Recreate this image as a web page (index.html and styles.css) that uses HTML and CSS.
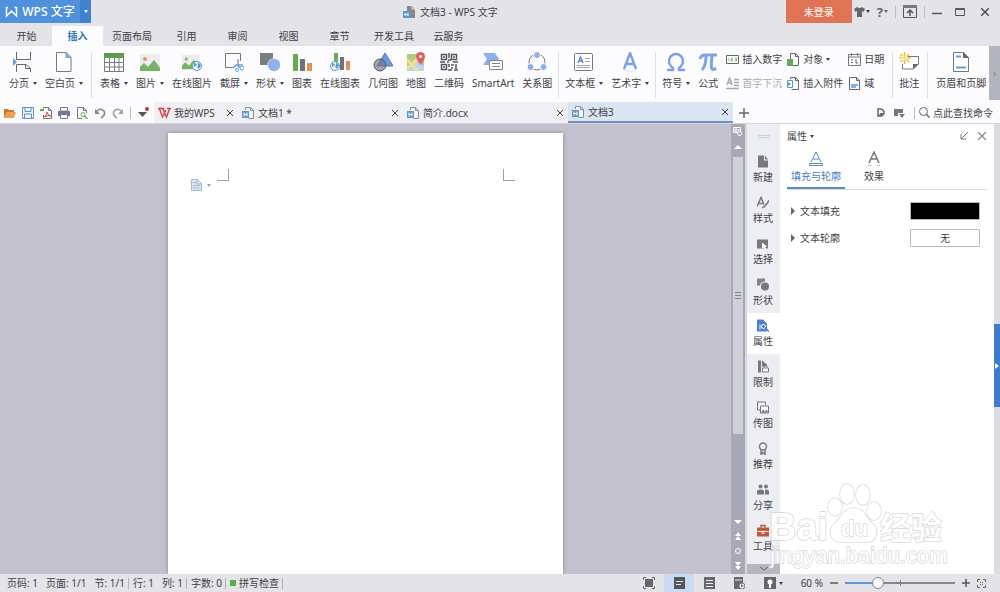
FILE: index.html
```html
<!DOCTYPE html>
<html lang="zh-CN">

<head>
    <meta charset="UTF-8">
    <meta name="viewport" content="width=device-width, initial-scale=1.0">
    <title>文档3 - WPS 文字</title>
    <link rel="stylesheet" href="styles.css">
</head>

<body>

    <!-- shared icons -->
    <svg class="icon_store">
        <symbol id="doc" viewBox="0 0 12 12">
            <path d="M3.5 3V.5h5l3 3v8h-5" fill="#f7f8fa" stroke="#8a8c94" />
            <path d="M8.5.5v3h3" fill="none" stroke="#8a8c94" />
            <rect x="0" y="4" width="7" height="7" fill="#5d97c9" />
            <path d="M2 5.5v4M2 7.5h3M5 5.5v4" stroke="#fff" />
        </symbol>
        <symbol id="close" viewBox="0 0 8 8">
            <path d="M1 1l6 6M7 1L1 7" stroke="currentColor" fill="none" />
        </symbol>
        <symbol id="photo" viewBox="0 0 20 20">
            <rect x="0" y="2" width="20" height="17" fill="#e9edf0" />
            <circle cx="5" cy="7" r="2" fill="#ea9257" />
            <path d="M0 19v-4l4-4 4 4 6-7 6 8v3z" fill="#74b266" />
        </symbol>
        <symbol id="globe" viewBox="0 0 10 10">
            <circle cx="5" cy="5" r="4.5" fill="#f5f9fc" stroke="#5b9bd0" />
            <path d="M2 2l3 1-1 2-2 1zM6 1l3 3-2 4-2-2 1-2z" fill="#5b9bd0" />
        </symbol>
    </svg>

    <header id="title_bar">
        <button class="app_name">
            <svg width="13" height="12" viewBox="0 0 13 12"><path d="M1.500 1v9L6.500 5l5 5V1M1 1.500h2M9.500 1.500h2" fill="none" stroke="#fff" stroke-width="1.500" /></svg>
            WPS 文字
        </button>
        <button class="app_menu" aria-label="菜单"><i class="arrow"></i></button>
        <div class="doc_title">
            <svg width="12" height="12" viewBox="0 0 12 12"><path d="M4 0h5l3 3v9H4z" fill="#85868c" /><path d="M9 0v3h3" fill="none" stroke="#e4e3e8" /><rect y="5" width="7" height="7" fill="#5a9bd5" /><path d="M2 7v3M2 8.500h3M5 7v3" stroke="#fff" /></svg>
            文档3 - WPS 文字
        </div>
        <button class="login">未登录</button>
        <div class="window_tools">
            <button aria-label="皮肤"><svg width="11" height="10" viewBox="0 0 11 10"><path d="M0 2l3-2q2.500 2 5 0l3 2-1.500 3L8 4v6H3V4L1.500 5z" fill="#66676d" /></svg><i class="arrow"></i></button>
            <button class="help" aria-label="帮助">?<i class="arrow"></i></button>
            <span class="line"></span>
            <button aria-label="功能区"><svg width="14" height="13" viewBox="0 0 14 13"><path d="M.5.500h13v12H.5z" fill="none" stroke="#55565c" /><path d="M0 0h14v3H0z" fill="#77787e" /><path d="M7 11V5M4 8l3-3 3 3" fill="none" stroke="#55565c" stroke-width="1.500" /></svg></button>
            <span class="line"></span>
            <button class="win" aria-label="最小化"><svg width="10" height="10" viewBox="0 0 10 10"><path d="M0 6.500h10" stroke="#55565c" stroke-width="1.500" /></svg></button>
            <button class="win" aria-label="最大化"><svg width="10" height="10" viewBox="0 0 10 10"><path d="M.5 1.500h9v7h-9zM0 2.500h10" fill="none" stroke="#55565c" /></svg></button>
            <button class="win" aria-label="关闭"><svg width="10" height="10" viewBox="0 0 8 8"><use href="#close" /></svg></button>
        </div>
    </header>

    <nav id="menu">
        <button>开始</button>
        <button class="active">插入</button>
        <button>页面布局</button>
        <button>引用</button>
        <button>审阅</button>
        <button>视图</button>
        <button>章节</button>
        <button>开发工具</button>
        <button>云服务</button>
    </nav>

    <div id="ribbon">
        <div class="tools">
            <button class="tool">
                <svg viewBox="0 0 20 20"><path d="M3.500 0v7.500h14V0M3.500 20v-7.500H13l4.500 4V20M12.500 12.500v4h5" fill="none" stroke="#66676d" /><path d="M0 6l4 4-4 4z" fill="#6d9be0" /></svg>
                <span>分页<i class="arrow"></i></span>
            </button>
            <button class="tool">
                <svg viewBox="0 0 20 20"><path d="M2.500.5H12l5 5v14H2.500z" fill="#fff" stroke="#77787e" /><path d="M12 .5l5 5h-5z" fill="#8ab0ee" stroke="#6d9be0" /></svg>
                <span>空白页<i class="arrow"></i></span>
            </button>
            <span class="sep"></span>
            <button class="tool">
                <svg viewBox="0 0 20 20"><path d="M.5 1.500h19v18H.5zM.5 10.500h19M.5 15h19M5.500 6v13M10.500 6v13M15 6v13" fill="#fff" stroke="#77787e" /><path d="M0 1h20v5H0z" fill="#5d9c50" /></svg>
                <span>表格<i class="arrow"></i></span>
            </button>
            <button class="tool">
                <svg><use href="#photo" /></svg>
                <span>图片<i class="arrow"></i></span>
            </button>
            <button class="tool">
                <svg viewBox="0 0 20 20"><use href="#photo" width="17" height="17" y="1" /><use href="#globe" x="10" y="9" width="10" height="10" /></svg>
                <span>在线图片</span>
            </button>
            <button class="tool">
                <svg viewBox="0 0 20 20"><path d="M9 15.500H1.500v-14h15V9" fill="none" stroke="#77787e" /><path d="M14 7v7l4 3M19 13h-7l-3 3" fill="none" stroke="#6d9ed6" stroke-width="1.500" /><circle cx="18" cy="16" r="2" fill="#fff" stroke="#6d9ed6" /><circle cx="13" cy="18" r="1.500" fill="#fff" stroke="#6d9ed6" /></svg>
                <span>截屏<i class="arrow"></i></span>
            </button>
            <button class="tool">
                <svg viewBox="0 0 20 20"><path d="M0 1h13v12H0z" fill="#7c7d83" /><circle cx="14" cy="13" r="6.500" fill="#8fb2ef" stroke="#fff" stroke-width=".5" /></svg>
                <span>形状<i class="arrow"></i></span>
            </button>
            <button class="tool">
                <svg viewBox="0 0 20 20"><path d="M1 2h5v17H1z" fill="#6aa956" /><path d="M8 7h5v12H8z" fill="#707177" /><path d="M15 11h5v8h-5z" fill="#e88e50" /></svg>
                <span>图表</span>
            </button>
            <button class="tool">
                <svg viewBox="0 0 20 20"><path d="M4 1h4v12H4z" fill="#6aa956" /><path d="M10 5h4v13h-4z" fill="#707177" /><path d="M16 9h4v9h-4z" fill="#e88e50" /><use href="#globe" x="0" y="9" width="10" height="10" /></svg>
                <span>在线图表</span>
            </button>
            <button class="tool">
                <svg viewBox="0 0 20 20"><path d="M12 1l8 13H4z" fill="#6a9be8" stroke="#4878bd" /><circle cx="7" cy="13" r="6" fill="#74777f" fill-opacity=".65" stroke="#55575e" /></svg>
                <span>几何图</span>
            </button>
            <button class="tool">
                <svg viewBox="0 0 20 20"><path d="M1 2h17v17H1z" fill="#a9cd83" /><path d="M1 19L12 8l6 6v5z" fill="#bcd4f0" /><path d="M1 8l11 11M1 17L14 4" stroke="#f5df96" stroke-width="3" /><path d="M14.500 13Q10 7 10 4.500a4.500 4.500 0 0 1 9 0Q19 7 14.500 13z" fill="#e0605f" /><circle cx="14.500" cy="4.500" r="1.500" fill="#fff" /></svg>
                <span>地图</span>
            </button>
            <button class="tool">
                <svg viewBox="0 0 20 20"><path d="M2.500 2.500h5v5h-5zM12.500 2.500h5v5h-5zM2.500 12.500h5v5h-5z" fill="none" stroke="#55565c" stroke-width="1.500" /><path d="M4 5h2M14 5h2M4 15h2M10 1v5M9 8h3M1 10h5M8 10h2M14 10h5M10 12v3M12 13h3M17 12v3M12 16h2M9 18h4M15 18h4M16 16h2" fill="none" stroke="#55565c" stroke-width="1.500" /></svg>
                <span>二维码</span>
            </button>
            <button class="tool">
                <svg viewBox="0 0 20 20"><path d="M0 1h12l4 6-4 6H0l4-6z" fill="#8db1ef" /><path d="M6.500 8.500h13v9h-13z" fill="#fff" stroke="#85868c" /><path d="M9 11.500h8M9 14.500h8" stroke="#85868c" /></svg>
                <span>SmartArt</span>
            </button>
            <button class="tool">
                <svg viewBox="0 0 20 20"><circle cx="10" cy="10" r="8" fill="none" stroke="#77787e" /><circle cx="10" cy="3" r="3.500" fill="#8db1ef" stroke="#fff" /><circle cx="3.500" cy="15" r="3.500" fill="#8db1ef" stroke="#fff" /><circle cx="16.500" cy="15" r="3.500" fill="#8db1ef" stroke="#fff" /></svg>
                <span>关系图</span>
            </button>
            <span class="sep tight"></span>
            <button class="tool">
                <svg viewBox="0 0 20 20"><rect x=".5" y="1.500" width="18" height="17" rx="1" fill="#fff" stroke="#77787e" /><path d="M4 11l2.500-6L9 11M5 9h3" fill="none" stroke="#5c8edb" stroke-width="1.500" /><path d="M11 6.500h5M11 9.500h5M3 13.500h13M3 15.500h13" stroke="#a5a6ab" /></svg>
                <span>文本框<i class="arrow"></i></span>
            </button>
            <button class="tool">
                <svg viewBox="0 0 20 20"><path d="M4 17l6-16 6 16M6 12h8" fill="none" stroke="#7ba4e8" stroke-width="2.500" /><path d="M3 18q7 3 14 0" fill="none" stroke="#dbe5f6" /></svg>
                <span>艺术字<i class="arrow"></i></span>
            </button>
            <span class="sep tight"></span>
            <button class="tool">
                <svg viewBox="0 0 20 20"><path d="M1 18h6v-2Q3 13 3 9a7 7 0 0 1 14 0q0 4-4 7v2h6" fill="none" stroke="#7ba4e8" stroke-width="2.500" /></svg>
                <span>符号<i class="arrow"></i></span>
            </button>
            <button class="tool">
                <svg viewBox="0 0 20 20"><path d="M2 7q1-4 5-4h12M8 4q0 10-4 14M14 4q-1 8-.5 12 1 3 4.500 0" fill="none" stroke="#7ba4e8" stroke-width="3" /></svg>
                <span>公式</span>
            </button>

            <div class="small_tools">
                <button><svg viewBox="0 0 13 13"><path d="M.5 2.500h12v8H.5z" fill="#fff" stroke="#66676d" /><path d="M3 5v3M5 5h1.500v1.500H5V8h2M8.500 5h2v3h-2M9 6.500h1" fill="none" stroke="#6aa956" stroke-width=".8" /></svg>插入数字</button>
                <button disabled><svg viewBox="0 0 13 13"><path d="M1 8l2.500-7L6 8M2 6h3M8 2.500h5M8 5.500h5M8 8.500h5M0 11.500h13" fill="none" stroke="#a9a9af" stroke-width="1.500" /></svg>首字下沉</button>
                <button><svg viewBox="0 0 13 13"><path d="M3.500 7V.5h5l3 3v9H6M8.500.5v3h3" fill="none" stroke="#66676d" /><path d="M0 6h6v7H0z" fill="#6aa956" /></svg>对象<i class="arrow"></i></button>
                <button><svg viewBox="0 0 13 13"><path d="M3.500 2V.5h5l3 3v9h-7M8.500.5v3h3" fill="none" stroke="#66676d" /><path d="M.5 3.500h5v7h-5z" fill="#fff" stroke="#5a9bd5" /><path d="M1 5l3 2-3 2z" fill="#5a9bd5" /></svg>插入附件</button>
                <button><svg viewBox="0 0 13 13"><path d="M.5 1.500h12v11H.5zM.5 4h12M3.500 0v3M9.500 0v3" fill="none" stroke="#77787e" /><path d="M3 7h2M3 9.500h2M8 6v4h2" fill="none" stroke="#66676d" /></svg>日期</button>
                <button><svg viewBox="0 0 13 13"><path d="M1.500.5h7l3 3v9h-10zM8.500.5v3h3" fill="#fff" stroke="#66676d" /><path d="M3 8h7M3 10h5" stroke="#5a9bd5" stroke-width="1.500" /></svg>域</button>
            </div>

            <span class="sep tight"></span>
            <button class="tool">
                <svg viewBox="0 0 20 20"><path d="M9 4.500h10.500V12l-5 5H3.500v-5" fill="#fff" stroke="#77787e" /><path d="M14 17v-5h5.500z" fill="#66676d" /><path d="M5.500 0v4M5.500 8v4M0 6h3M8 6h4M1.500 2l2 2M10 2L7.500 4.500M1.500 10l2-2M10 10L7.500 7.500" stroke="#efbd3f" stroke-width="1.500" /><circle cx="5.500" cy="6" r="2" fill="#f9dc79" /></svg>
                <span>批注</span>
            </button>
            <span class="sep"></span>
            <button class="tool">
                <svg viewBox="0 0 20 20"><path d="M2.500.5h10l5 5v14h-15z" fill="#fff" stroke="#77787e" /><path d="M12 0v6h6z" fill="#66676d" /><path d="M5 4.500h5M5 15.500h10" stroke="#6d9ed6" stroke-width="2" /></svg>
                <span>页眉和页脚</span>
            </button>
        </div>
        <button class="ribbon_next" aria-label="更多">›</button>
    </div>

    <div id="tab_bar">
        <div class="quick">
            <button aria-label="打开"><svg viewBox="0 0 12 12"><path d="M0 11V2h4l1 1h5v2H3z" fill="#cc7a30" /><path d="M3 5h9l-2 6H0z" fill="#f0a04b" /></svg></button>
            <button aria-label="保存"><svg viewBox="0 0 12 12"><path d="M.5.500h11v11H.5zM3 .5v4h6v-4M2.500 11V7h7v4" fill="#eaf2fb" stroke="#5e8fc5" /></svg></button>
            <button aria-label="输出PDF"><svg viewBox="0 0 12 12"><path d="M3.500 3V.5h5l3 3v8h-8V8M8.500.5v3h3" fill="none" stroke="#77787e" /><path d="M0 3h4" stroke="#6aa956" stroke-width="2" /><path d="M4 10q3-2 3-5 1 4 4 4-4-1-7 1" fill="none" stroke="#d0514e" /></svg></button>
            <button aria-label="打印"><svg viewBox="0 0 12 12"><path d="M0 4h12v5H0z" fill="#77779b" /><path d="M2.500.500h7V4h-7zM2.500 7.500h7v4h-7z" fill="#fff" stroke="#77779b" /></svg></button>
            <button aria-label="打印预览"><svg viewBox="0 0 12 12"><path d="M6 11.500H1.500V.5h6l3 3V6M7.500.5v3h3" fill="none" stroke="#77787e" /><circle cx="7" cy="7.500" r="2" fill="#fff" stroke="#6aa956" /><path d="M8.500 9l3 3" stroke="#6aa956" stroke-width="1.500" /></svg></button>
            <button aria-label="撤销"><svg viewBox="0 0 12 12"><path d="M2 5q4-5 8-1 2 4-3 7" fill="none" stroke="#85868c" stroke-width="1.500" /><path d="M1 2v5h5z" fill="#85868c" /></svg></button>
            <button aria-label="恢复"><svg viewBox="0 0 12 12"><path d="M10 5Q6 0 2 4q-2 4 3 7" fill="none" stroke="#a0a1a6" stroke-width="1.500" /><path d="M11 2v5H6z" fill="#a0a1a6" /></svg></button>
            <span class="line"></span>
            <button aria-label="自定义"><svg viewBox="0 0 12 12"><path d="M1 5h9L5.500 10z" fill="#55565c" /><circle cx="10" cy="2" r="2" fill="#ca3038" /></svg></button>
        </div>
        <div class="doc_tab home">
            <svg width="13" height="12" viewBox="0 0 13 12"><path d="M0 1.500h6.500M9 1.500h4M1.500 2l3 8L8 3M5 2l3.500 8L11.500 2" fill="none" stroke="#d4494e" stroke-width="1.500" /></svg>
            <span>我的WPS</span>
            <button aria-label="关闭"><svg><use href="#close" /></svg></button>
        </div>
        <div class="doc_tab">
            <svg width="12" height="12"><use href="#doc" /></svg>
            <span>文档1 *</span>
            <button aria-label="关闭"><svg><use href="#close" /></svg></button>
        </div>
        <div class="doc_tab">
            <svg width="12" height="12"><use href="#doc" /></svg>
            <span>简介.docx</span>
            <button aria-label="关闭"><svg><use href="#close" /></svg></button>
        </div>
        <div class="doc_tab active">
            <svg width="12" height="12"><use href="#doc" /></svg>
            <span>文档3</span>
            <button aria-label="关闭"><svg><use href="#close" /></svg></button>
        </div>
        <button class="add_tab" aria-label="新建"><svg width="10" height="10" viewBox="0 0 10 10"><path d="M0 5h10M5 0v10" stroke="#66676d" stroke-width="1.500" /></svg></button>
        <div class="find">
            <button aria-label="文档"><svg width="8" height="9" viewBox="0 0 8 9"><path d="M1 1h3q3 1 3 3.500T4 8H1z" fill="none" stroke="#66676d" stroke-width="1.500" /><path d="M3 5h4L4 8H2z" fill="#66676d" /></svg></button>
            <button aria-label="窗口"><svg width="11" height="10" viewBox="0 0 11 10"><path d="M0 1h9v4H4v3H0zM5 6h6L8 10z" fill="#77787e" /></svg></button>
            <span class="line"></span>
            <button class="find_text"><svg width="11" height="11" viewBox="0 0 11 11"><circle cx="4.500" cy="4.500" r="4" fill="none" stroke="#66676d" /><path d="M7.500 7.500l3 3" stroke="#66676d" stroke-width="1.500" /></svg>点此查找命令</button>
        </div>
    </div>

    <main>
        <div id="canvas">
            <div class="page">
                <div class="margins">
                    <span class="corner left"></span>
                    <span class="corner right"></span>
                </div>
                <button class="page_option" aria-label="页面选项"><svg width="11" height="12" viewBox="0 0 11 12"><path d="M.5.500h6l4 4v7H.5z" fill="#dbe6f1" stroke="#a3b9d0" /><path d="M6 0v5h5M2 3.500h3M2 6.500h7M2 9h7" fill="none" stroke="#a3b9d0" /></svg><i class="arrow"></i></button>
            </div>
        </div>

        <div id="scroll">
            <svg width="10" height="10" viewBox="0 0 10 10"><path d="M.5.500h7v5h-7zM.5 3h7M3 .5v5" fill="none" stroke="#fff" /><circle cx="6.500" cy="6.500" r="2" fill="#a9a8b6" stroke="#fff" /></svg>
            <svg width="8" height="4" viewBox="0 0 8 4"><path d="M0 4l4-4 4 4z" fill="#fff" /></svg>
            <div class="track"><div class="thumb"></div></div>
            <svg width="8" height="4" viewBox="0 0 8 4"><path d="M0 0l4 4 4-4z" fill="#fff" /></svg>
            <svg width="6" height="8" viewBox="0 0 6 8"><path d="M0 4l3-4 3 4zM0 8l3-4 3 4z" fill="#fff" /></svg>
            <svg width="6" height="6" viewBox="0 0 6 6"><circle cx="3" cy="3" r="2.500" fill="none" stroke="#fff" /></svg>
            <svg width="6" height="8" viewBox="0 0 6 8"><path d="M0 0l3 4 3-4zM0 4l3 4 3-4z" fill="#fff" /></svg>
        </div>

        <aside id="task_bar">
            <span class="grip"></span>
            <button><svg viewBox="0 0 12 12"><path d="M1 0h6v5h4v7H1zM8 0l3 4H8z" fill="#77787e" /></svg>新建</button>
            <button><svg viewBox="0 0 12 12"><path d="M0 10L4 1l3 7M1 7h5M5 11q2 1 7-7" fill="none" stroke="#77787e" stroke-width="1.500" /></svg>样式</button>
            <button><svg viewBox="0 0 12 12"><path d="M0 2h11v9H0z" fill="#77787e" /><path d="M5 5l5 4-2 .5 1 2-1.500.5-1-2L5 11z" fill="#fff" /></svg>选择</button>
            <button><svg viewBox="0 0 12 12"><path d="M0 0h8v3a5 5 0 0 0-5 4H0z" fill="#85868c" /><circle cx="8" cy="8" r="4" fill="#77787e" /></svg>形状</button>
            <button class="active"><svg viewBox="0 0 12 12"><path d="M0 0h6l4 4v8H0z" fill="#4d82cf" /><circle cx="6.500" cy="7" r="2" fill="none" stroke="#fff" /><path d="M8 8l4 4" stroke="#4d82cf" stroke-width="1.500" /><path d="M3 5v5" stroke="#fff" /></svg>属性</button>
            <button><svg viewBox="0 0 12 12"><path d="M1 0h3v12H1zM5 0l5 4v2H5z" fill="#77787e" /><path d="M5.500 7.500h6v4h-6zM7 7V5.500h3V7" fill="#fff" stroke="#77787e" /></svg>限制</button>
            <button><svg viewBox="0 0 12 12"><path d="M3 8.500H.5v-8h8V4" fill="none" stroke="#77787e" /><path d="M3.500 4.500h8v7h-8z" fill="#fff" stroke="#77787e" /><path d="M4 11l2-3 2 2 2-2 1 3z" fill="#77787e" /></svg>传图</button>
            <button><svg viewBox="0 0 12 12"><circle cx="6" cy="4" r="3.500" fill="none" stroke="#77787e" stroke-width="1.500" /><path d="M4 7v5l2-2 2 2V7" fill="none" stroke="#77787e" stroke-width="1.500" /></svg>推荐</button>
            <button><svg viewBox="0 0 12 12"><circle cx="3.500" cy="3" r="2" fill="#77787e" /><circle cx="9" cy="3" r="2" fill="#77787e" /><path d="M0 11V8q0-2 3.500-2T7 8v3zM8 11V7q0-1 1-1 3 0 3 2v3z" fill="#77787e" /></svg>分享</button>
            <button><svg viewBox="0 0 12 12"><path d="M4 3V1h4v2" fill="none" stroke="#bd563b" stroke-width="1.500" /><path d="M0 3h12v9H0z" fill="#bd563b" /><path d="M0 7h12M5 6v3h2V6" fill="none" stroke="#fff" stroke-width=".8" /></svg>工具</button>
            <button class="more" aria-label="更多"><svg width="8" height="4" viewBox="0 0 8 4"><path d="M0 0l4 3 4-3" fill="none" stroke="#66676d" /></svg></button>
        </aside>

        <section id="panel">
            <div class="panel_head">
                <button>属性<i class="arrow"></i></button>
                <button class="push" aria-label="折叠"><svg width="8" height="8" viewBox="0 0 8 8"><path d="M8 0L1 7M1 2v5h5" fill="none" stroke="#77787e" /></svg></button>
                <button class="shut" aria-label="关闭"><svg width="10" height="10"><use href="#close" /></svg></button>
            </div>
            <div class="panel_tabs">
                <button class="active"><svg width="16" height="16" viewBox="0 0 16 16"><path d="M3 11L8 1l5 10M5 8h6M1.500 12.500h13v2h-13z" fill="none" stroke="#5a8cc8" /></svg>填充与轮廓</button>
                <button><svg width="16" height="16" viewBox="0 0 16 16"><path d="M3 12L8 1l5 11M5 8h6" fill="none" stroke="#77787e" stroke-width="1.500" /><path d="M2 14.500h3M11 14.500h3" stroke="#b5b6ba" /></svg>效果</button>
            </div>
            <div class="option">
                <button><i class="fold"></i>文本填充</button>
                <button class="swatch black" aria-label="黑色"></button>
            </div>
            <div class="option">
                <button><i class="fold"></i>文本轮廓</button>
                <button class="swatch">无</button>
            </div>
        </section>

        <div id="edge"><button aria-label="展开"><svg width="4" height="6" viewBox="0 0 4 6"><path d="M0 0l4 3-4 3z" fill="#fff" /></svg></button></div>

        <svg class="watermark" width="190" height="96" viewBox="0 0 190 96">
            <g fill="#fff" stroke="#d3d3d7" stroke-width="1.500">
                <ellipse cx="67" cy="31" rx="7" ry="9" />
                <ellipse cx="79" cy="18" rx="7" ry="10" />
                <ellipse cx="95" cy="19" rx="7" ry="10" />
                <ellipse cx="106" cy="35" rx="7" ry="9" />
                <path d="M86 32c10 0 13 11 19 16 7 7 3 18-5 18H72c-9 0-13-11-6-18 6-5 10-16 20-16z" />
                <text class="mark_big" x="1" y="64">Bai</text>
                <text class="mark_du" x="73" y="60">du</text>
                <text class="mark_cn" x="112" y="63">经验</text>
                <text class="mark_url" x="2" y="87">jingyan.baidu.com</text>
            </g>
        </svg>
    </main>

    <footer id="status">
        <div class="info">
            <span>页码: 1</span>
            <span>页面: 1/1</span>
            <span class="end">节: 1/1</span>
            <span>行: 1</span>
            <span class="end">列: 1</span>
            <span class="end">字数: 0</span>
            <span class="end spell"><i></i>拼写检查</span>
        </div>
        <div class="views">
            <button aria-label="全屏"><svg viewBox="0 0 12 12"><path d="M.5 3V.5H3M9 .5h2.500V3M.5 9v2.500H3M9 11.500h2.500V9" fill="none" stroke="#66676d" /><path d="M2 2h8v8H2z" fill="#66676d" /></svg></button>
            <button class="active" aria-label="页面视图"><svg viewBox="0 0 12 12"><path d="M1 0h11v12H1z" fill="#55565c" /><path d="M3 4.500h7M3 7.500h5" stroke="#dfe6f0" /></svg></button>
            <button aria-label="大纲视图"><svg viewBox="0 0 12 12"><path d="M1 0h11v12H1z" fill="#66676d" /><path d="M3 3.500h7M3 6.500h7M3 9.500h7" stroke="#eee" /></svg></button>
            <button aria-label="网页视图"><svg viewBox="0 0 12 12"><path d="M1 0h9v12H1z" fill="#66676d" /><path d="M2 3h7" stroke="#eee" /><circle cx="9" cy="9" r="3" fill="#e4e3e8" stroke="#77787e" /><path d="M8 7l3 2-3 1z" fill="#77787e" /></svg></button>
            <button aria-label="护眼"><svg viewBox="0 0 12 12"><path d="M0 0h12v12H0z" fill="#66676d" /><circle cx="6" cy="5" r="2.500" fill="#fff" /><path d="M6 7v4" stroke="#fff" stroke-width="2" /></svg><i class="arrow"></i></button>
        </div>
        <label for="zoom">60 %</label>
        <button aria-label="缩小"><svg width="8" height="8" viewBox="0 0 8 8"><path d="M0 4h8" stroke="#55565c" stroke-width="1.500" /></svg></button>
        <input type="range" id="zoom" min="0" max="100" value="28">
        <button aria-label="放大"><svg width="8" height="8" viewBox="0 0 8 8"><path d="M0 4h8M4 0v8" stroke="#55565c" stroke-width="1.500" /></svg></button>
        <button aria-label="适合窗口"><svg width="9" height="9" viewBox="0 0 9 9"><path d="M.5 3V.5H3M6 .5h2.500V3M.5 6v2.500H3M6 8.500h2.500V6M3 3l1 1M6 3L5 4M3 6l1-1M6 6L5 5" fill="none" stroke="#66676d" /></svg></button>
    </footer>

</body>

</html>
```
FILE: styles.css
```css
*{
    box-sizing: border-box;
}

body{
    margin: 0;
    height: 100vh;
    display: flex;
    flex-direction: column;
    overflow: hidden;
    background-color: #e4e3e8;
    color: #3f4046;
    font-family: "Noto Sans", "Noto Sans CJK SC", sans-serif;
    font-size: 10px;
    line-height: 14px;
    white-space: nowrap;
}

button{
    display: flex;
    align-items: center;
    justify-content: center;
    gap: 3px;
    padding: 0;
    border: 0;
    background: none;
    color: inherit;
    font: inherit;
    white-space: nowrap;
}

svg{
    flex-shrink: 0;
}

.icon_store{
    display: none;
}

.arrow{
    flex-shrink: 0;
    border: 2px solid transparent;
    border-top: 3px solid currentColor;
    border-bottom: 0;
}

.line{
    width: 1px;
    height: 12px;
    background-color: #b9b9bf;
}

/* title bar */
#title_bar{
    display: flex;
    height: 23px;
}

.app_name{
    width: 80px;
    background-color: #4f91dd;
    color: white;
    font-size: 12px;
    font-weight: 500;
    gap: 4px;
}

.app_menu{
    width: 11px;
    background-color: #3f82cf;
    color: white;
}

.doc_title{
    flex: 1;
    display: flex;
    align-items: center;
    justify-content: center;
    gap: 5px;
    padding-left: 24px;
}

.login{
    width: 66px;
    background-color: #e07356;
    color: white;
}

.window_tools{
    display: flex;
    align-items: center;
    gap: 7px;
    padding: 0 10px 0 2px;
}

.window_tools button{
    gap: 1px;
}

.window_tools .win{
    margin-right: 6px;
}

.window_tools .win:last-child{
    margin-left: 2px;
    margin-right: 0;
}

.help{
    font-size: 13px;
    font-weight: bold;
    color: #66676d;
}

/* menu */
#menu{
    display: flex;
    height: 23px;
    padding: 3px 0 0 1px;
}

#menu button{
    min-width: 51px;
    padding: 0 9px;
}

#menu .active{
    background-color: #fcfcfe;
    color: #2f77bd;
    font-weight: bold;
}

/* ribbon */
#ribbon{
    display: flex;
    height: 56px;
    background-color: #fcfcfe;
}

.tools{
    flex: 1;
    display: flex;
    align-items: flex-start;
    gap: 8px;
    padding: 6px 0 0 9px;
    overflow: hidden;
}

.tool{
    flex-direction: column;
    gap: 4px;
    flex-shrink: 0;
}

.tool svg{
    width: 20px;
    height: 20px;
}

.tool span{
    display: flex;
    align-items: center;
    gap: 4px;
}

.sep{
    width: 1px;
    height: 46px;
    background-color: #dddde2;
}

.tight{
    margin: 0 -2px;
}

.small_tools{
    display: grid;
    grid-template-rows: 14px 14px;
    grid-auto-flow: column;
    row-gap: 10px;
    column-gap: 5px;
    padding-right: 2px;
}

.small_tools button{
    justify-content: flex-start;
}

.small_tools svg{
    width: 13px;
    height: 13px;
}

.small_tools button:disabled{
    color: #a9a9af;
}

.ribbon_next{
    width: 11px;
    height: 54px;
    background-color: #b4b4be;
    color: #77787e;
}

/* document tabs */
#tab_bar{
    display: flex;
    height: 22px;
    background-color: #fbfbfd;
    border-bottom: 1px solid #d4d5df;
}

.quick{
    display: flex;
    align-items: center;
    gap: 6px;
    padding: 0 5px 0 4px;
}

.quick svg{
    width: 12px;
    height: 12px;
}

.doc_tab{
    flex: 0 1 165px;
    display: flex;
    align-items: center;
    gap: 4px;
    padding: 0 4px;
    background-color: #f0eff3;
}

.doc_tab span{
    flex: 1;
}

.doc_tab button svg{
    width: 8px;
    height: 8px;
}

.doc_tab.home{
    flex-basis: 84px;
    gap: 3px;
}

.doc_tab.active{
    background-color: #dae5f4;
    border-bottom: 2px solid #6d93c7;
}

.add_tab{
    width: 22px;
}

.find{
    display: flex;
    align-items: center;
    gap: 9px;
    margin-left: auto;
    padding-right: 7px;
}

.find .find_text{
    margin-left: -5px;
}

/* work area */
main{
    position: relative;
    flex: 1;
    display: flex;
    min-height: 0;
}

#canvas{
    flex: 1;
    display: flex;
    justify-content: center;
    padding-top: 9px;
    background-color: #c2c1cd;
    overflow: hidden;
}

.page{
    width: 54%;
    padding: 36px 48px 0 49px;
    background-color: white;
    box-shadow: 0 0 4px #85858f;
}

.margins{
    display: flex;
    justify-content: space-between;
}

.corner{
    width: 12px;
    height: 12px;
    border-bottom: 1px solid #a0a0a5;
}

.corner.left{
    border-right: 1px solid #a0a0a5;
}

.corner.right{
    border-left: 1px solid #a0a0a5;
}

.page_option{
    margin: -2px 0 0 -26px;
    gap: 5px;
    color: #a0a0a5;
}

#scroll{
    width: 16px;
    display: flex;
    flex-direction: column;
    align-items: center;
    gap: 8px;
    padding: 3px 0 4px;
    background-color: #a9a8b6;
    border-right: 2px solid #d5d5dd;
}

.track{
    flex: 1;
    align-self: stretch;
    margin: 0 2px;
}

.thumb{
    height: 78%;
    background: repeating-linear-gradient(#85868c 0 1px, transparent 1px 3px) center / 6px 7px no-repeat #d0d0d8;
}

#task_bar{
    width: 33px;
    display: flex;
    flex-direction: column;
    background-color: #edeef2;
}

.grip{
    align-self: center;
    width: 12px;
    height: 3px;
    margin: 11px 0;
    border-top: 1px solid #cdced4;
    border-bottom: 1px solid #cdced4;
}

#task_bar button{
    flex: 0 0 41px;
    flex-direction: column;
    gap: 2px;
    padding-right: 1px;
}

#task_bar button svg{
    width: 12px;
    height: 13px;
}

#task_bar .active{
    background-color: white;
}

#task_bar .more{
    flex-basis: 10px;
    margin-top: auto;
    padding: 0;
    background-color: #b6b6c1;
}

#task_bar .more svg{
    width: 8px;
    height: 4px;
}

#panel{
    width: 214px;
    padding: 5px 7px;
    background-color: white;
}

.panel_head{
    display: flex;
    gap: 9px;
}

.push{
    margin-left: auto;
}

.shut{
    color: #85868c;
}

.panel_tabs{
    display: flex;
    margin: 8px 0 12px;
    border-bottom: 1px solid #d8d8dc;
}

.panel_tabs button{
    flex-direction: column;
    gap: 2px;
    height: 38px;
    padding: 0 3px;
    justify-content: flex-start;
    min-width: 58px;
}

.panel_tabs .active{
    color: #4a80c0;
    border-bottom: 2px solid #5a8cc8;
}

.option{
    display: flex;
    align-items: center;
    justify-content: space-between;
    height: 18px;
    margin-bottom: 9px;
    padding: 0 7px 0 4px;
}

.option button{
    gap: 5px;
}

.fold{
    border: 4px solid transparent;
    border-left: 4px solid #66676d;
    border-right: 0;
}

.option .swatch{
    width: 70px;
    height: 18px;
    border: 1px solid #b9b9bf;
    border-radius: 1px;
}

.option .black{
    background-color: black;
}

#edge{
    width: 6px;
    display: flex;
    align-items: center;
    background-color: #dcdce3;
}

#edge button{
    width: 6px;
    height: 83px;
    margin-bottom: -33px;
    background-color: #3f7acd;
}

.watermark{
    position: absolute;
    right: 42px;
    bottom: 2px;
    opacity: .85;
    font-family: "Liberation Sans", "Noto Sans CJK SC", sans-serif;
    paint-order: stroke;
}

.mark_big{
    font-size: 38px;
    font-weight: bold;
}

.mark_du{
    font-size: 22px;
    font-weight: bold;
}

.mark_cn{
    font-size: 31px;
    font-weight: bold;
}

.mark_url{
    font-size: 22px;
}

/* status bar */
#status{
    display: flex;
    align-items: center;
    height: 18px;
    gap: 7px;
    padding: 0 14px 0 7px;
}

.info{
    flex: 1;
    display: flex;
    align-items: center;
    gap: 8px;
}

.info .end{
    padding-right: 3px;
    margin-right: -4px;
    border-right: 1px solid #b0b0b6;
    line-height: 11px;
}

.spell{
    display: flex;
    align-items: center;
    gap: 3px;
}

.spell i{
    width: 6px;
    height: 6px;
    background-color: #5aad46;
}

.views{
    display: flex;
    align-self: stretch;
}

.views button{
    width: 30px;
}

.views button:last-child{
    width: 40px;
}

.views .active{
    background-color: #c9dbf2;
}

.views svg{
    width: 12px;
    height: 12px;
}

#zoom{
    appearance: none;
    width: 110px;
    height: 12px;
    margin: 0;
    background:
        linear-gradient(#85868c, #85868c) center / 1px 6px no-repeat,
        linear-gradient(to right, #5f98d8 28%, #85868c 28%) center / 100% 2px no-repeat;
}

#zoom::-webkit-slider-thumb{
    appearance: none;
    width: 12px;
    height: 12px;
    background-color: #fafafa;
    border: 1px solid #85868c;
    border-radius: 50%;
}
```
